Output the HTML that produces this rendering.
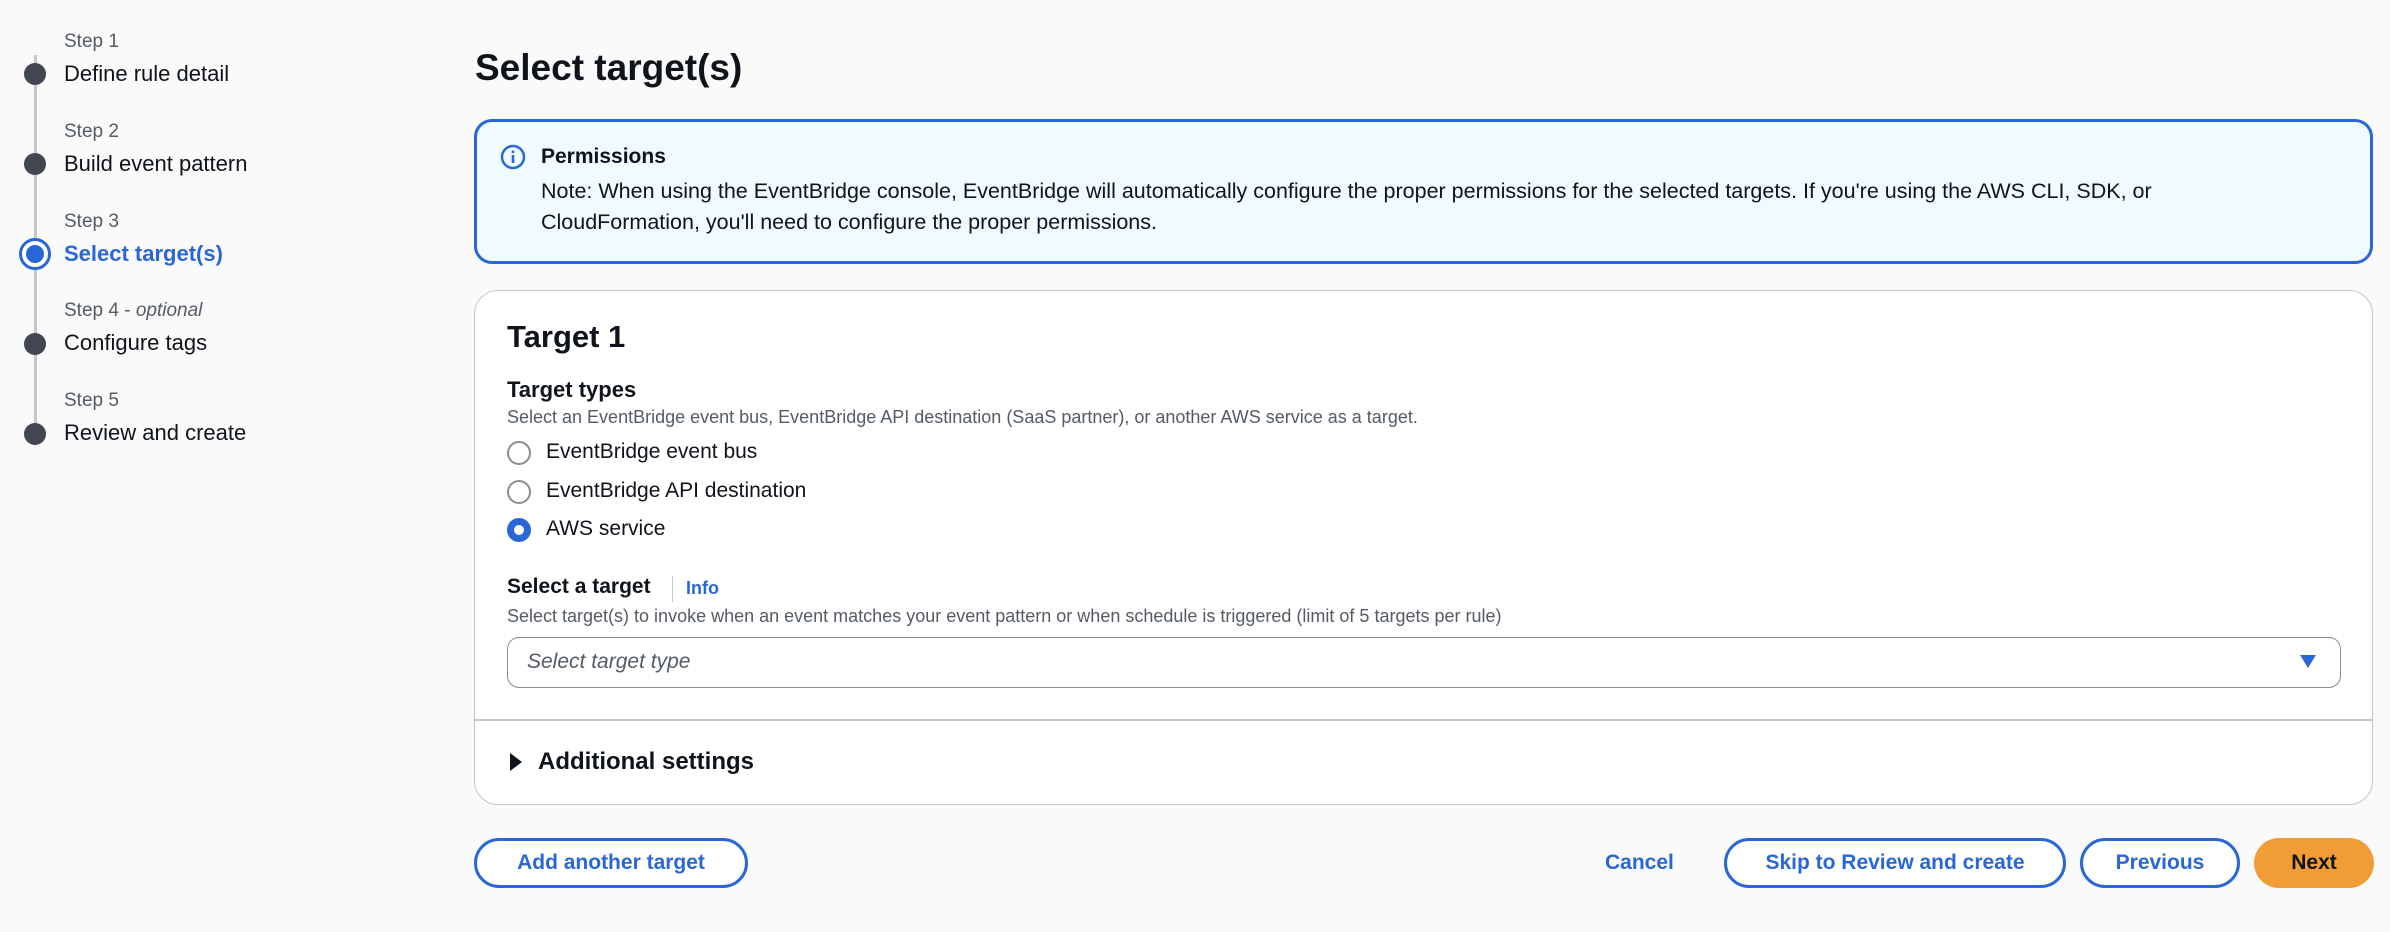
<!DOCTYPE html>
<html><head><meta charset="utf-8"><style>
*{box-sizing:border-box;margin:0;padding:0}
body{width:2390px;height:932px;background:#fafafa;font-family:"Liberation Sans",sans-serif;color:#0f141a;position:relative;overflow:hidden}
.a{position:absolute;white-space:nowrap}
.sl{font-size:19px;color:#545b64}
.st{font-size:22px;color:#0f141a}
.dot{position:absolute;left:24px;width:22px;height:22px;border-radius:50%;background:#424650}
.blue{color:#2a67d6}
.btn{position:absolute;top:838px;height:50px;border:3px solid #2a67d6;border-radius:25px;color:#2a67d6;font-weight:bold;font-size:21px;display:flex;align-items:center;justify-content:center;background:#fff}
.radio{position:absolute;left:507px;width:24px;height:24px;border-radius:50%;border:2px solid #8c8c94;background:#fff}
</style></head><body>
<div class="a" style="left:34px;top:55px;width:3px;height:370px;background:#c6c6cd"></div>
<div class="a sl" style="left:64px;top:31px">Step 1</div>
<div class="dot" style="top:63px"></div><div class="a st" style="left:64px;top:61px">Define rule detail</div>
<div class="a sl" style="left:64px;top:121px">Step 2</div>
<div class="dot" style="top:153px"></div><div class="a st" style="left:64px;top:151px">Build event pattern</div>
<div class="a sl" style="left:64px;top:211px">Step 3</div>
<div class="a" style="left:19px;top:238px;width:32px;height:32px;border-radius:50%;border:3px solid #2a67d6;background:#fff"></div>
<div class="a" style="left:26px;top:245px;width:18px;height:18px;border-radius:50%;background:#2a67d6"></div>
<div class="a st blue" style="left:64px;top:241px;font-weight:bold">Select target(s)</div>
<div class="a sl" style="left:64px;top:300px">Step 4 - <i>optional</i></div>
<div class="dot" style="top:333px"></div><div class="a st" style="left:64px;top:330px">Configure tags</div>
<div class="a sl" style="left:64px;top:390px">Step 5</div>
<div class="dot" style="top:423px"></div><div class="a st" style="left:64px;top:420px">Review and create</div>

<div class="a" style="left:475px;top:47px;font-size:37px;font-weight:bold">Select target(s)</div>

<div class="a" style="left:474px;top:119px;width:1899px;height:145px;border:3px solid #2a67d6;border-radius:18px;background:#f0fbff"></div>
<svg class="a" style="left:500px;top:144px" width="26" height="26" viewBox="0 0 26 26"><circle cx="13" cy="13" r="11" fill="none" stroke="#2a67d6" stroke-width="2.5"/><rect x="11.7" y="11" width="2.6" height="8" fill="#2a67d6"/><rect x="11.7" y="6.5" width="2.6" height="2.6" fill="#2a67d6"/></svg>
<div class="a" style="left:541px;top:145px;font-size:21px;font-weight:bold">Permissions</div>
<div class="a" style="left:541px;top:176px;font-size:21.5px;line-height:31px;white-space:normal;width:1745px">Note: When using the EventBridge console, EventBridge will automatically configure the proper permissions for the selected targets. If you're using the AWS CLI, SDK, or CloudFormation, you'll need to configure the proper permissions.</div>

<div class="a" style="left:474px;top:290px;width:1899px;height:515px;border:1.5px solid #c6c6cd;border-radius:24px;background:#fff"></div>
<div class="a" style="left:507px;top:319px;font-size:31px;font-weight:bold">Target 1</div>
<div class="a" style="left:507px;top:377px;font-size:22px;font-weight:bold">Target types</div>
<div class="a" style="left:507px;top:407px;font-size:18px;color:#545b64">Select an EventBridge event bus, EventBridge API destination (SaaS partner), or another AWS service as a target.</div>
<div class="radio" style="top:441px"></div><div class="a" style="left:546px;top:440px;font-size:21px">EventBridge event bus</div>
<div class="radio" style="top:480px"></div><div class="a" style="left:546px;top:479px;font-size:21px">EventBridge API destination</div>
<div class="radio" style="top:518px;border:7px solid #2a67d6"></div><div class="a" style="left:546px;top:517px;font-size:21px">AWS service</div>
<div class="a" style="left:507px;top:575px;font-size:21px;font-weight:bold">Select a target</div>
<div class="a" style="left:672px;top:576px;width:1px;height:26px;background:#c6c6cd"></div>
<div class="a blue" style="left:686px;top:578px;font-size:18px;font-weight:bold">Info</div>
<div class="a" style="left:507px;top:606px;font-size:18px;color:#545b64">Select target(s) to invoke when an event matches your event pattern or when schedule is triggered (limit of 5 targets per rule)</div>
<div class="a" style="left:507px;top:637px;width:1834px;height:51px;border:1.5px solid #8c8c94;border-radius:12px;background:#fff"></div>
<div class="a" style="left:527px;top:650px;font-size:21px;font-style:italic;color:#545b64">Select target type</div>
<svg class="a" style="left:2300px;top:655px" width="16" height="14"><polygon points="0,0 16,0 8,13" fill="#2a67d6"/></svg>
<div class="a" style="left:475px;top:719px;width:1897px;height:1.5px;background:#c6c6cd"></div>
<svg class="a" style="left:510px;top:753px" width="12" height="18"><polygon points="0,0 12,9 0,18" fill="#0f141a"/></svg>
<div class="a" style="left:538px;top:748px;font-size:24px;font-weight:bold">Additional settings</div>

<div class="btn" style="left:474px;width:274px">Add another target</div>
<div class="a blue" style="left:1605px;top:851px;font-size:21px;font-weight:bold">Cancel</div>
<div class="btn" style="left:1724px;width:342px">Skip to Review and create</div>
<div class="btn" style="left:2080px;width:160px">Previous</div>
<div class="btn" style="left:2254px;width:120px;border:none;background:#f09d38;color:#0f141a">Next</div>
</body></html>
